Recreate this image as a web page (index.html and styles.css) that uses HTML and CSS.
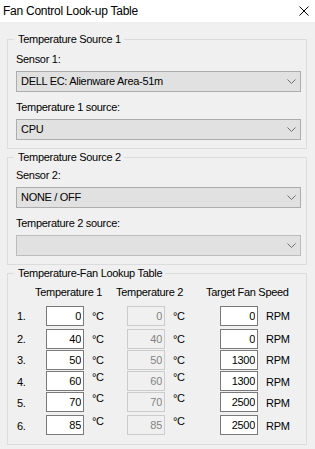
FILE: index.html
```html
<!DOCTYPE html>
<html lang="en">
<head>
    <meta charset="UTF-8">
    <title>Fan Control Look-up Table</title>
    <link rel="stylesheet" href="styles.css">
</head>
<body>
    <div class="titlebar">
        <span class="title">Fan Control Look-up Table</span>
        <svg class="close" width="10" height="10" viewBox="0 0 10 10">
            <path d="M0.5 0.5 L9.5 9.5 M9.5 0.5 L0.5 9.5" stroke="#000" stroke-width="1" fill="none"/>
        </svg>
    </div>

    <fieldset class="group group-src1">
        <legend>Temperature Source 1</legend>
        <div class="field-label">Sensor 1:</div>
        <div class="combo">
            <span>DELL EC: Alienware Area-51m</span>
            <svg class="arrow" width="9" height="5" viewBox="0 0 9 5"><polyline points="0.5,0.5 4.5,4.5 8.5,0.5" fill="none" stroke="#6f6f6f" stroke-width="1"/></svg>
        </div>
        <div class="field-label second">Temperature 1 source:</div>
        <div class="combo">
            <span>CPU</span>
            <svg class="arrow" width="9" height="5" viewBox="0 0 9 5"><polyline points="0.5,0.5 4.5,4.5 8.5,0.5" fill="none" stroke="#6f6f6f" stroke-width="1"/></svg>
        </div>
    </fieldset>

    <fieldset class="group group-src2">
        <legend>Temperature Source 2</legend>
        <div class="field-label">Sensor 2:</div>
        <div class="combo">
            <span>NONE / OFF</span>
            <svg class="arrow" width="9" height="5" viewBox="0 0 9 5"><polyline points="0.5,0.5 4.5,4.5 8.5,0.5" fill="none" stroke="#6f6f6f" stroke-width="1"/></svg>
        </div>
        <div class="field-label second">Temperature 2 source:</div>
        <div class="combo disabled">
            <span></span>
            <svg class="arrow" width="9" height="5" viewBox="0 0 9 5"><polyline points="0.5,0.5 4.5,4.5 8.5,0.5" fill="none" stroke="#6f6f6f" stroke-width="1"/></svg>
        </div>
    </fieldset>

    <fieldset class="group group-table">
        <legend>Temperature-Fan Lookup Table</legend>
        <div class="table-head">
            <span class="head-t1">Temperature 1</span>
            <span class="head-t2">Temperature 2</span>
            <span>Target Fan Speed</span>
        </div>

        <div class="lut-row">
            <span class="idx">1.</span>
            <input class="num" value="0">
            <span class="unit">°C</span>
            <input class="num" value="0" disabled>
            <span class="unit">°C</span>
            <input class="num" value="0">
            <span class="unit">RPM</span>
        </div>
        <div class="lut-row wide">
            <span class="idx">2.</span>
            <input class="num" value="40">
            <span class="unit">°C</span>
            <input class="num" value="40" disabled>
            <span class="unit">°C</span>
            <input class="num" value="0">
            <span class="unit">RPM</span>
        </div>
        <div class="lut-row">
            <span class="idx">3.</span>
            <input class="num" value="50">
            <span class="unit">°C</span>
            <input class="num" value="50" disabled>
            <span class="unit">°C</span>
            <input class="num" value="1300">
            <span class="unit">RPM</span>
        </div>
        <div class="lut-row low">
            <span class="idx">4.</span>
            <input class="num" value="60">
            <span class="unit">°C</span>
            <input class="num" value="60" disabled>
            <span class="unit">°C</span>
            <input class="num" value="1300">
            <span class="unit">RPM</span>
        </div>
        <div class="lut-row low">
            <span class="idx">5.</span>
            <input class="num" value="70">
            <span class="unit">°C</span>
            <input class="num" value="70" disabled>
            <span class="unit">°C</span>
            <input class="num" value="2500">
            <span class="unit">RPM</span>
        </div>
        <div class="lut-row wide low">
            <span class="idx">6.</span>
            <input class="num" value="85">
            <span class="unit">°C</span>
            <input class="num" value="85" disabled>
            <span class="unit">°C</span>
            <input class="num" value="2500">
            <span class="unit">RPM</span>
        </div>
    </fieldset>
</body>
</html>
```

FILE: styles.css
```css
body {
    margin: 0;
    width: 315px;
    height: 449px;
    background-color: #f0f0f0;
    font-family: "Liberation Sans", Arial, sans-serif;
    font-size: 11px;
    line-height: 13px;
    letter-spacing: -0.3px;
    color: #000;
    overflow: hidden;
}

.titlebar {
    height: 22px;
    background-color: #fff;
    display: flex;
    align-items: center;
    justify-content: space-between;
    padding: 0 6px 0 3px;
}

.title {
    font-size: 12px;
    line-height: 14px;
    letter-spacing: -0.25px;
}

.close {
    display: block;
}

/* group boxes */
.group {
    box-sizing: border-box;
    width: 300px;
    margin: 2px 0 0 7px;
    padding: 7px 5px 8px 8px;
    border: 1px solid #dcdcdc;
    min-inline-size: 0;
}

.group legend {
    padding: 0 3px 0 4px;
    margin-left: -2px;
    line-height: 13px;
}

.group-src1 {
    margin-top: 11px;
}

.group-src2 {
    padding-top: 5px;
}

.field-label {
    margin-bottom: 5px;
}

.field-label.second {
    margin-top: 9px;
}

.combo {
    box-sizing: border-box;
    height: 21px;
    width: 285px;
    background-color: #e1e1e1;
    border: 1px solid #adadad;
    display: flex;
    align-items: center;
    justify-content: space-between;
    padding: 0 4px 0 4px;
}

.combo.disabled {
    border-color: #bcbcbc;
}

.arrow {
    display: block;
}

/* lookup table */
.group-table {
    padding-top: 6px;
    padding-bottom: 9px;
}

.table-head {
    display: flex;
    padding-left: 19px;
}

.head-t1 {
    width: 81px;
}

.head-t2 {
    width: 90px;
}

.lut-row {
    display: grid;
    grid-template-columns: 30px 38px 43px 38px 55px 38px auto;
    align-items: center;
    height: 20px;
    margin-top: 1px;
}

.table-head + .lut-row {
    margin-top: 7px;
}

.lut-row.wide {
    margin-top: 3px;
}

.idx {
    padding-left: 1px;
}

.unit {
    padding-left: 8px;
}

.lut-row.low .idx,
.lut-row.low .unit:last-child {
    padding-top: 3px;
}

.lut-row.low .unit {
    align-self: start;
}

.lut-row.low .unit:last-child {
    align-self: center;
}

.num {
    box-sizing: border-box;
    width: 38px;
    height: 20px;
    margin: 0;
    padding: 0 2px 0 0;
    border: 1px solid #7a7a7a;
    background-color: #fff;
    font-family: "Liberation Sans", Arial, sans-serif;
    font-size: 11px;
    letter-spacing: -0.3px;
    color: #000;
    text-align: right;
    outline: none;
}

.num:disabled {
    border-color: #cccccc;
    background-color: #f0f0f0;
    color: #838383;
}
```
